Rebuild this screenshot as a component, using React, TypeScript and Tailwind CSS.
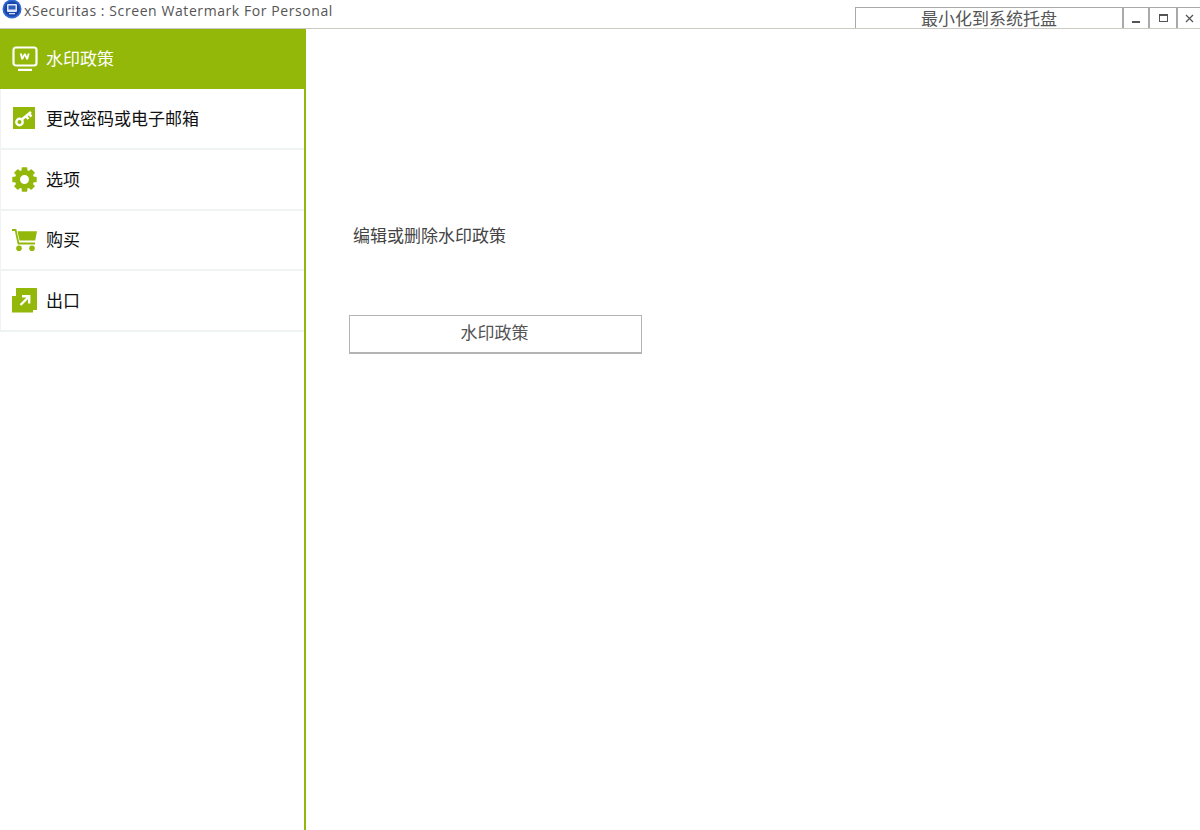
import { ReactNode } from "react";

const cjk = "font-['Liberation_Sans','Noto_Sans_CJK_SC',sans-serif]";
const green = "#93b809";

function AppLogo() {
  return (
    <svg width="20" height="20" viewBox="0 0 20 20" className="shrink-0" aria-hidden="true">
      <circle cx="10" cy="9" r="9.500" fill="#2f6ad6" />
      <circle cx="10" cy="9" r="7.800" fill="#1a46a8" />
      <rect x="5" y="4" width="10" height="8" rx="1" fill="#dfe8fa" />
      <rect x="6.500" y="5.500" width="7" height="4" fill="#2f5fb8" />
      <rect x="7" y="13" width="6" height="1.300" fill="#cfdcf6" />
    </svg>
  );
}

function MonitorIcon() {
  return (
    <svg width="26" height="26" viewBox="0 0 26 26" fill="none" aria-hidden="true">
      <rect x="1.500" y="1.500" width="23" height="18" rx="2.500" stroke="#fff" strokeWidth="2.200" />
      <rect x="6" y="22.800" width="14" height="2.200" fill="#fff" />
      <path d="M7.800 7.500l1.600 6h1.600l1.700-3.600 1.700 3.600h1.600l1.600-6h-1.800l-.8 3-1.400-3h-1.600l-1.400 3-.8-3z" fill="#fff" />
    </svg>
  );
}

function KeyIcon() {
  return (
    <svg width="22" height="22" viewBox="0 0 22 22" aria-hidden="true">
      <rect width="22" height="22" fill={green} />
      <circle cx="6.500" cy="15" r="3.200" fill="none" stroke="#fff" strokeWidth="2.400" />
      <path d="M8.800 12.500L18 5M13 9l2.400 3M16 6.600l2.400 3" stroke="#fff" strokeWidth="2.500" fill="none" />
    </svg>
  );
}

function GearIcon() {
  return (
    <svg width="25" height="25" viewBox="0 0 24 24" aria-hidden="true">
      <circle cx="12" cy="12" r="6.800" fill="none" stroke={green} strokeWidth="5" />
      {[0, 45, 90, 135, 180, 225, 270, 315].map((deg) => (
        <rect key={deg} x="9.300" y="0.300" width="5.400" height="4.500" rx="0.800" fill={green} transform={`rotate(${deg} 12 12)`} />
      ))}
    </svg>
  );
}

function CartIcon() {
  return (
    <svg width="25" height="22" viewBox="0 0 25 22" aria-hidden="true">
      <path d="M0 0h4.300l2.900 13.600H23v1.900H5.700L2.900 1.900H0z" fill={green} />
      <path d="M5.500 2.200H25l-1.800 9.300H7.500z" fill={green} />
      <circle cx="7" cy="19.200" r="2.800" fill={green} />
      <circle cx="20" cy="19.200" r="2.800" fill={green} />
    </svg>
  );
}

function ExitIcon() {
  return (
    <svg width="25" height="25" viewBox="0 0 25 25" aria-hidden="true">
      <path d="M4 0.500a.5.500 0 0 1 .5-.5H24.500a.5.500 0 0 1 .5.500V22h-4v2.500H0V8h4z" fill={green} />
      <path d="M8.500 17L16 9.500M10 8.200h7.200v7.200" stroke="#fff" strokeWidth="2.400" fill="none" />
    </svg>
  );
}

function NavItem({ icon, label, active }: { icon: ReactNode; label: string; active?: boolean }) {
  return (
    <div
      className={
        active
          ? "-mr-0.5 flex h-[60px] items-center bg-[#93b809] pl-3 text-white"
          : "flex h-[60.75px] items-center border-b-2 border-l border-[#f0f3f3] pl-[11px] text-[#111]"
      }
    >
      <span className="flex w-[34px] shrink-0 items-center">{icon}</span>
      <span className={active ? "text-[17px] leading-none" : "pt-[2px] text-[17px] leading-none"}>{label}</span>
    </div>
  );
}

export default function App() {
  return (
    <div className={`flex h-[830px] w-[1200px] flex-col overflow-hidden bg-white ${cjk}`}>
      <header className="flex h-[29px] shrink-0 items-start border-b border-[#c9cbc4]">
        <div className="flex h-[20px] items-center pl-[2px]">
          <AppLogo />
          <span className="pl-[2px] font-['Open_Sans',sans-serif] text-[14px] tracking-[0.58px] whitespace-nowrap text-[#555]">
            xSecuritas : Screen Watermark For Personal
          </span>
        </div>
        <div className="mt-[7px] ml-auto flex h-[21px]">
          <button className="flex h-full w-[267px] items-start justify-center border-t border-l border-[#a9a9a9] pt-[3px] text-[17px] leading-[17px] text-[#555]">
            最小化到系统托盘
          </button>
          <button className="flex h-full w-[28px] items-center justify-center border-x-2 border-t border-[#a9a9a9]">
            <span className="mt-[7px] h-[2px] w-[8px] bg-[#555]" />
          </button>
          <button className="flex h-full w-[28px] items-center justify-center border-t border-r-2 border-[#a9a9a9]">
            <span className="h-[8px] w-[9px] border border-t-2 border-[#555]" />
          </button>
          <button className="flex h-full w-[22px] items-center justify-center border-t border-[#a9a9a9]">
            <svg width="9" height="9" viewBox="0 0 9 9" aria-hidden="true">
              <path d="M1 1l7 7M8 1L1 8" stroke="#555" strokeWidth="1.300" />
            </svg>
          </button>
        </div>
      </header>
      <div className="flex min-h-0 flex-1">
        <aside className="w-[306px] shrink-0 border-r-2 border-[#93b809]">
          <NavItem active icon={<MonitorIcon />} label="水印政策" />
          <NavItem icon={<span className="ml-px"><KeyIcon /></span>} label="更改密码或电子邮箱" />
          <NavItem icon={<GearIcon />} label="选项" />
          <NavItem icon={<CartIcon />} label="购买" />
          <NavItem icon={<ExitIcon />} label="出口" />
        </aside>
        <main className="flex-1 pt-[197px] pl-[43px]">
          <p className="pl-1 text-[17px] leading-[22px] text-[#444]">编辑或删除水印政策</p>
          <button className="mt-[67px] h-[39px] w-[293px] border border-b-2 border-[#b4b4b4] pr-[2px] text-[17px] text-[#555]">
            水印政策
          </button>
        </main>
      </div>
    </div>
  );
}
